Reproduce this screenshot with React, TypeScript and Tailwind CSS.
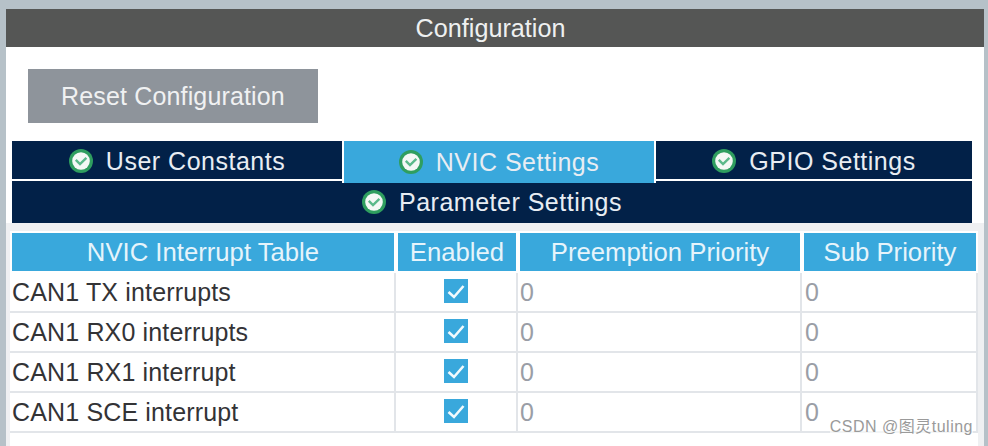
const TABLE_COLS = "grid grid-cols-[386px_122px_284px_176px]";

const ROWS = ["CAN1 TX interrupts", "CAN1 RX0 interrupts", "CAN1 RX1 interrupt", "CAN1 SCE interrupt"];

function OkIcon() {
  return (
    <svg width="24" height="24" viewBox="0 0 24 24" className="shrink-0">
      <circle cx="12" cy="12" r="12" fill="#2f9e5f" />
      <circle cx="12" cy="12" r="8.8" fill="#f4f8f5" />
      <path d="M6.8 10.8 L11 15 L17.4 8.8" fill="none" stroke="#5bb98a" strokeWidth="2.4" />
    </svg>
  );
}

function TabLabel({ label }: { label: string }) {
  return (
    <span className="flex items-center gap-[13px] text-[25px] leading-none tracking-[0.5px] text-[#e8edf3]">
      <OkIcon />
      {label}
    </span>
  );
}

function HeaderCell({ label }: { label: string }) {
  return (
    <div className="mx-[2px] h-[38px] pt-[1px] bg-[#39a8dc] flex items-center justify-center text-[25.7px] leading-none text-[#e6f4fb]">
      {label}
    </div>
  );
}

function CheckBox() {
  return (
    <div className="w-[24px] h-[24px] bg-[#39a8dc] flex items-center justify-center">
      <svg width="24" height="24" viewBox="0 0 24 24">
        <path d="M4.5 13 L10 18 L19.5 7" fill="none" stroke="#f2fafd" strokeWidth="2.6" />
      </svg>
    </div>
  );
}

function Row({ name }: { name: string }) {
  return (
    <div className={`${TABLE_COLS} h-[40px] text-[25px] leading-none`}>
      <div className="border-r-2 border-b-2 border-[#e2e5e9] pl-[2px] pt-[7px] text-[#333336] tracking-[0.15px] whitespace-nowrap">{name}</div>
      <div className="border-r-2 border-b-2 border-[#e2e5e9] flex justify-center pt-[6px]">
        <CheckBox />
      </div>
      <div className="border-r-2 border-b-2 border-[#e2e5e9] pl-[2px] pt-[7px] text-[#9a9ea6]">0</div>
      <div className="border-r-2 border-b-2 border-[#e2e5e9] pl-[3px] pt-[7px] text-[#9a9ea6]">0</div>
    </div>
  );
}

export default function App() {
  return (
    <div className="relative w-[988px] h-[446px] overflow-hidden bg-[#b6c1c8] pt-[9px] pl-[6px] pr-[4px] flex flex-col font-['Liberation_Sans',sans-serif]">
      <div className="flex-1 flex flex-col bg-white">
        {/* Title */}
        <div className="h-[38px] pr-[9px] pt-[1px] bg-[#555655] flex items-center justify-center text-[25.2px] leading-none text-[#eef0f0]">
          Configuration
        </div>

        {/* Reset */}
        <div className="ml-[22px] mt-[22px] w-[290px] h-[54px] bg-[#8e949b] flex items-center justify-center text-[25px] leading-none tracking-[0.15px] text-[#f0f1f2]">
          Reset Configuration
        </div>

        {/* Tabs */}
        <div className="mt-[18px] mx-[6px] mr-[12px]">
          <div className="flex items-start h-[40px]">
            <div className="w-[330px] h-[38px] pt-[2px] bg-[#022148] flex items-center justify-center">
              <TabLabel label="User Constants" />
            </div>
            <div className="relative z-10 w-[314px] h-[42px] bg-[#39a8dc] border-x-2 border-white flex items-center justify-center">
              <TabLabel label="NVIC Settings" />
            </div>
            <div className="w-[316px] h-[38px] pt-[2px] bg-[#022148] flex items-center justify-center">
              <TabLabel label="GPIO Settings" />
            </div>
          </div>
          <div className="h-[42px] bg-[#022148] flex items-center justify-center">
            <TabLabel label="Parameter Settings" />
          </div>
        </div>

        {/* Table */}
        <div className="flex-1 flex flex-col bg-[#eff0f2] pt-[8px] pl-[4px] pr-[6px]">
          <div className="flex-1 bg-white">
            <div className={`${TABLE_COLS} py-[2px]`}>
              <HeaderCell label="NVIC Interrupt Table" />
              <HeaderCell label="Enabled" />
              <HeaderCell label="Preemption Priority" />
              <HeaderCell label="Sub Priority" />
            </div>
            {ROWS.map((name) => (
              <Row key={name} name={name} />
            ))}
          </div>
        </div>
      </div>

      {/* Watermark */}
      <div className="absolute right-[15px] bottom-[9px] text-[16px] leading-[20px] tracking-[0.5px] text-[#9a9a9a] bg-white/60 font-['Liberation_Sans','Noto_Sans_CJK_SC',sans-serif]">
        CSDN @图灵tuling
      </div>
    </div>
  );
}
